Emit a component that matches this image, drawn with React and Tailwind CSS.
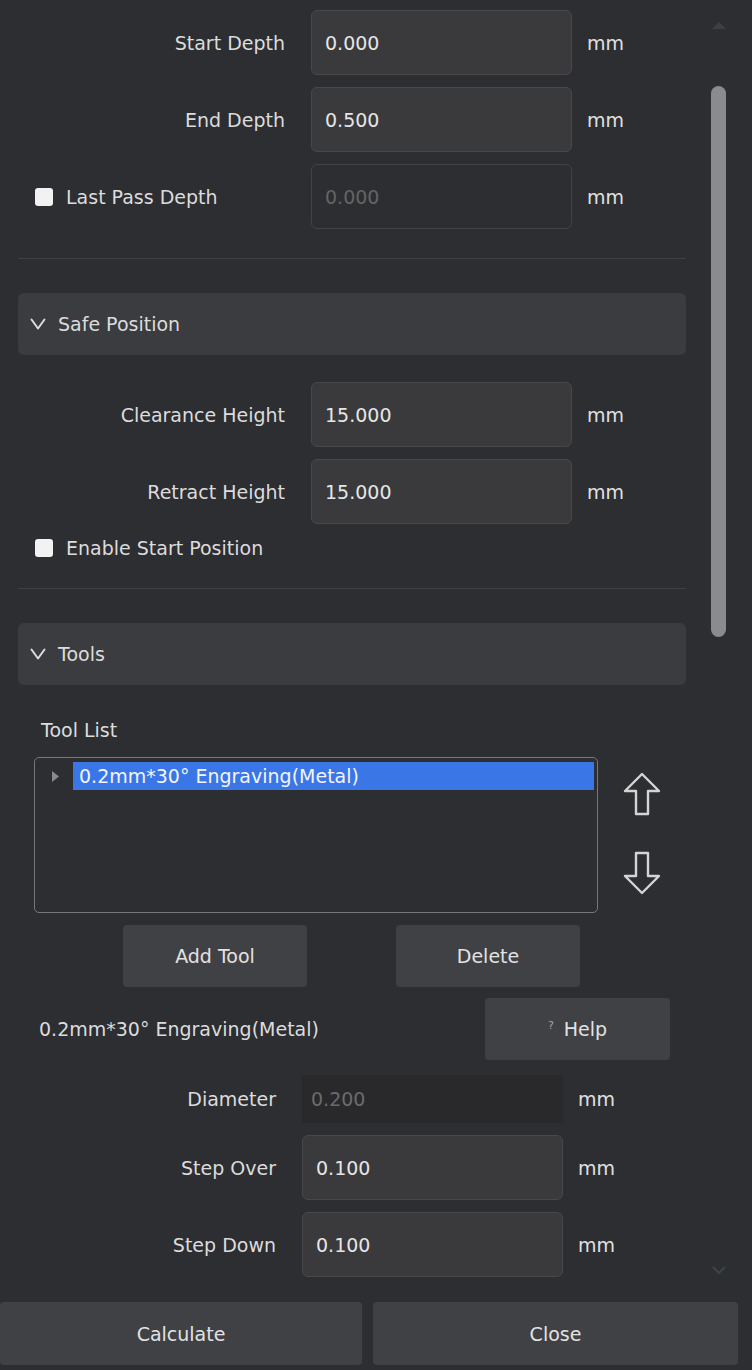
import React from "react";

const FONT = "font-['DejaVu_Sans','Liberation_Sans',sans-serif]";

function Checkbox() {
  return <div className="w-[18px] h-[18px] rounded-[3px] bg-[#f2f2f2] shrink-0" />;
}

function Input({ value, disabled, width = "w-[261px]", height = "h-[65px]", ghost }) {
  if (ghost) {
    return (
      <div className={`${width} ${height} bg-[#29292c] flex items-center pl-[9px] text-[#6b6b6d]`}>
        {value}
      </div>
    );
  }
  return (
    <div
      className={`${width} ${height} rounded-[6px] border flex items-center px-[13px] ${
        disabled
          ? "border-[#434346] bg-[#2d2e32] text-[#646466]"
          : "border-[#48484b] bg-[#3a3a3d] text-[#e6e6e6]"
      }`}
    >
      {value}
    </div>
  );
}

function Row({ label, value, disabled, checkbox, labelW = "w-[267px]", ghost, height }) {
  return (
    <div className={`flex items-center ${height || "h-[65px]"}`}>
      {checkbox ? (
        <div className={`${labelW} flex items-center pl-[17px] gap-[13px]`}>
          <Checkbox />
          <span>{label}</span>
        </div>
      ) : (
        <div className={`${labelW} text-right`}>{label}</div>
      )}
      <div className="ml-[26px] h-full flex items-center">
        <Input value={value} disabled={disabled} ghost={ghost} height={height || "h-[65px]"} />
      </div>
      <div className="ml-[15px] text-[#e0e0e0]">mm</div>
    </div>
  );
}

function SectionHeader({ title }) {
  return (
    <div className="h-[62px] rounded-[6px] bg-[#3b3c40] flex items-center pl-[12px] gap-[12px]">
      <svg width="16" height="12" viewBox="0 0 16 12" fill="none">
        <polyline points="1.5,1.5 8,10.5 14.5,1.5" stroke="#dcdcdc" strokeWidth="2" strokeLinejoin="round" strokeLinecap="round" />
      </svg>
      <span>{title}</span>
    </div>
  );
}

function Arrow({ down }) {
  return (
    <svg width="38" height="44" viewBox="0 0 38 44" fill="none">
      <path
        d={down ? "M19 42 L36 25 L25 25 L25 2 L13 2 L13 25 L2 25 Z" : "M19 2 L36 19 L25 19 L25 42 L13 42 L13 19 L2 19 Z"}
        stroke="#d4d4d4"
        strokeWidth="2.4"
        strokeLinejoin="round"
      />
    </svg>
  );
}

function Button({ children, className = "" }) {
  return (
    <div className={`bg-[#404145] rounded-[4px] flex items-center justify-center text-[#e2e2e2] ${className}`}>
      {children}
    </div>
  );
}

export default function App() {
  return (
    <div className={`w-[752px] h-[1370px] bg-[#2d2e32] text-[#dcdcdc] text-[19px] leading-[24px] ${FONT} overflow-hidden`}>
      <div className="flex h-[1292px]">
        {/* content */}
        <div className="w-[704px] pl-[18px] pr-[18px] pt-[10px] flex flex-col">
          <Row label="Start Depth" value="0.000" />
          <div className="mt-[12px]">
            <Row label="End Depth" value="0.500" />
          </div>
          <div className="mt-[12px]">
            <Row label="Last Pass Depth" value="0.000" disabled checkbox />
          </div>
          <div className="mt-[29px] h-px bg-[#3f4044]" />
          <div className="mt-[34px]">
            <SectionHeader title="Safe Position" />
          </div>
          <div className="mt-[27px]">
            <Row label="Clearance Height" value="15.000" />
          </div>
          <div className="mt-[12px]">
            <Row label="Retract Height" value="15.000" />
          </div>
          <div className="mt-[12px] h-[24px] flex items-center pl-[17px] gap-[13px]">
            <Checkbox />
            <span>Enable Start Position</span>
          </div>
          <div className="mt-[28px] h-px bg-[#3f4044]" />
          <div className="mt-[34px]">
            <SectionHeader title="Tools" />
          </div>
          <div className="mt-[33px] pl-[23px] h-[24px]">Tool List</div>
          <div className="mt-[15px] flex">
            <div className="ml-[16px] w-[564px] h-[156px] rounded-[5px] border border-[#77777a] flex flex-col">
              <div className="mt-[4px] flex items-center h-[28px]">
                <div className="w-[38px] flex justify-end pr-[14px]">
                  <svg width="7" height="11" viewBox="0 0 7 11">
                    <polygon points="0,0 7,5.5 0,11" fill="#8a8a8c" />
                  </svg>
                </div>
                <div className="flex-1 mr-[3px] h-full bg-[#3b76e6] text-[#f2f5ff] pl-[6px] flex items-center">
                  0.2mm*30° Engraving(Metal)
                </div>
              </div>
            </div>
            <div className="ml-[25px] flex flex-col pt-[15px]">
              <Arrow />
              <div className="mt-[35px]">
                <Arrow down />
              </div>
            </div>
          </div>
          <div className="mt-[12px] flex h-[62px]">
            <Button className="ml-[105px] w-[184px]">Add Tool</Button>
            <Button className="ml-[89px] w-[184px]">Delete</Button>
          </div>
          <div className="mt-[11px] flex h-[62px] items-center">
            <div className="pl-[21px] w-[467px]">0.2mm*30° Engraving(Metal)</div>
            <Button className="w-[185px] h-full">
              <span className="text-[11px] leading-none text-[#a8a8a8] mr-[10px] -mt-[8px]">?</span>
              <span>Help</span>
            </Button>
          </div>
          <div className="mt-[15px]">
            <Row label="Diameter" value="0.200" labelW="w-[258px]" ghost height="h-[48px]" />
          </div>
          <div className="mt-[12px]">
            <Row label="Step Over" value="0.100" labelW="w-[258px]" />
          </div>
          <div className="mt-[12px]">
            <Row label="Step Down" value="0.100" labelW="w-[258px]" />
          </div>
        </div>
        {/* scrollbar */}
        <div className="w-[48px] flex flex-col pl-[7px]">
          <div className="mt-[21px] w-[15px] flex justify-center">
            <svg width="14" height="8" viewBox="0 0 14 8">
              <polygon points="0,8 7,1 14,8" fill="#3e3f43" />
            </svg>
          </div>
          <div className="mt-[57px] w-[15px] h-[551px] rounded-full bg-[#8b8b8d]" />
          <div className="flex-1" />
          <div className="mb-[18px] w-[15px] flex justify-center">
            <svg width="14" height="8" viewBox="0 0 14 8">
              <polyline points="1,1 7,7 13,1" fill="none" stroke="#37464a" strokeWidth="2" />
            </svg>
          </div>
        </div>
      </div>
      <div className="mt-[10px] flex h-[63px]">
        <Button className="w-[362px] h-full">Calculate</Button>
        <Button className="ml-[11px] w-[365px] h-full">Close</Button>
      </div>
    </div>
  );
}
